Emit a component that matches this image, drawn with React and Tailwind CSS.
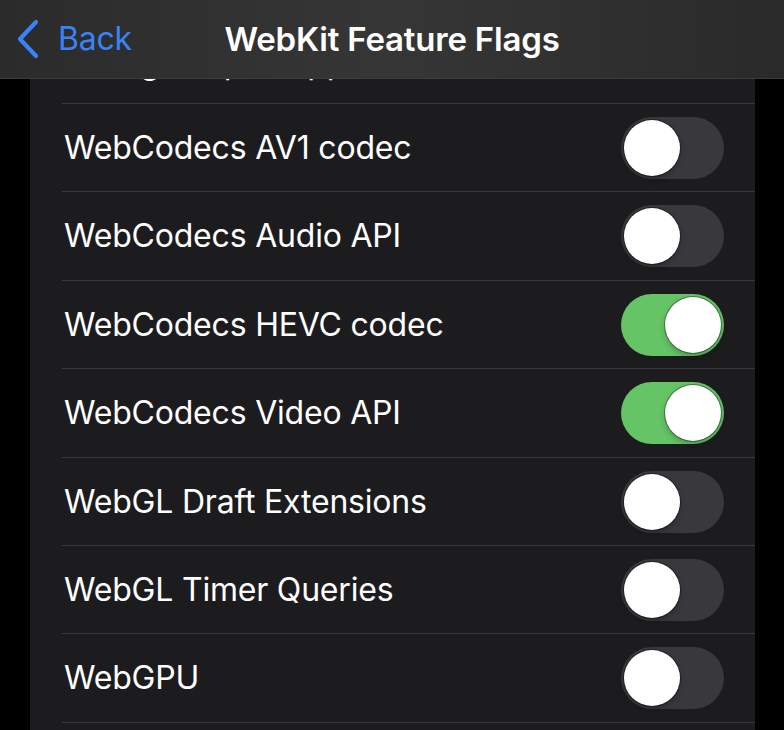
import React from "react";

const rows = [
  { label: "WebCodecs AV1 codec", on: false, h: "h-[88px]" },
  { label: "WebCodecs Audio API", on: false, h: "h-[89px]" },
  { label: "WebCodecs HEVC codec", on: true, h: "h-[88px]" },
  { label: "WebCodecs Video API", on: true, h: "h-[89px]" },
  { label: "WebGL Draft Extensions", on: false, h: "h-[88px]" },
  { label: "WebGL Timer Queries", on: false, h: "h-[88px]" },
  { label: "WebGPU", on: false, h: "h-[89px]" },
];

function Toggle({ on }) {
  return (
    <div
      className={
        "w-[103px] h-[62px] rounded-full p-[3px] flex items-center " +
        (on ? "bg-[#65c466] justify-end" : "bg-[#39393d] justify-start")
      }
    >
      <div className="w-[56px] h-[56px] rounded-full bg-white shadow-[0_0_0_1px_rgba(0,0,0,0.35),0_3px_6px_rgba(0,0,0,0.25)]" />
    </div>
  );
}

export default function App() {
  return (
    <div
      className="w-[784px] h-[730px] bg-black overflow-hidden text-white"
      style={{ fontFamily: "Inter, 'Liberation Sans', sans-serif" }}
    >
      <div className="h-[79px] border-b border-[#3b3b3b] bg-linear-to-r from-[#2b2b2b] via-[#353635] to-[#2a2a2a] grid grid-cols-[1fr_auto_1fr] items-center">
        <div className="flex items-center pl-[16px] text-[#3a82f7]">
          <svg width="24" height="40" viewBox="0 0 24 40" fill="none">
            <path d="M20 3 L4 20 L20 37" stroke="#3a82f7" strokeWidth="4.2" strokeLinecap="round" strokeLinejoin="round" />
          </svg>
          <span className="ml-[18px] text-[32px] leading-none tracking-[-0.2px]">Back</span>
        </div>
        <span className="text-[33px] font-semibold leading-none tracking-[-0.2px]">WebKit Feature Flags</span>
        <div />
      </div>
      <div className="mx-[30px] w-[725px] bg-[#1c1c1e]">
        <div className="h-[24px] overflow-hidden pl-[34px]">
          <div className="-mt-[36px] text-[32px] leading-[40px] tracking-[-0.2px]">Web gamepad apps</div>
        </div>
        {rows.map((r) => (
          <div key={r.label} className={"ml-[32px] border-t border-[#38383a] flex items-center justify-between pr-[31px] " + r.h}>
            <span className="pl-[2px] text-[32px] leading-none tracking-[-0.2px]">{r.label}</span>
            <Toggle on={r.on} />
          </div>
        ))}
        <div className="ml-[32px] border-t border-[#38383a] h-[20px]" />
      </div>
    </div>
  );
}
